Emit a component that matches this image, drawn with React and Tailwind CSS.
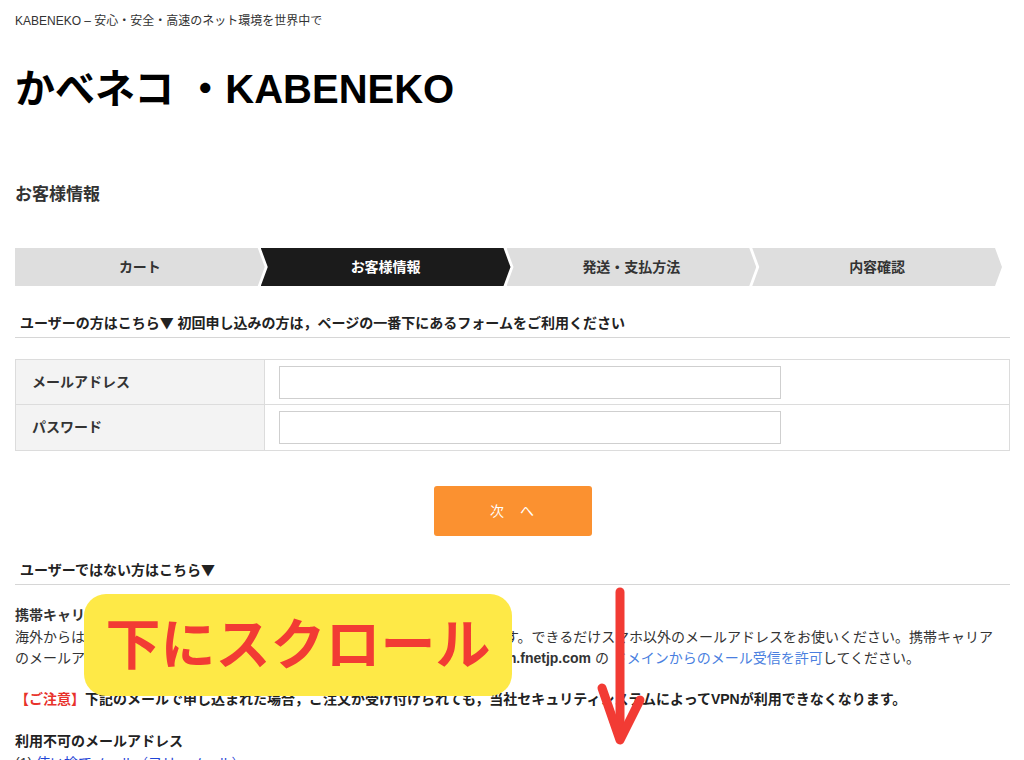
import React from 'react'

const steps = ['カート', 'お客様情報', '発送・支払方法', '内容確認']

const StepBar = () => {
    return (
        <div className="mt-[41px] flex w-[987px] h-[38px]">
            {steps.map((label, i) => (
                <div
                    key={label}
                    className={`flex-1 flex items-center justify-center text-[14px] font-bold ${i === 0
                        ? '[clip-path:polygon(0_0,calc(100%_-_7px)_0,100%_50%,calc(100%_-_7px)_100%,0_100%)]'
                        : '-ml-[4px] [clip-path:polygon(0_0,calc(100%_-_7px)_0,100%_50%,calc(100%_-_7px)_100%,0_100%,7px_50%)]'
                        } ${i === 1 ? 'bg-[#1b1b1b] text-white' : 'bg-[#dedede] text-[#333]'}`}
                >
                    {label}
                </div>
            ))}
        </div>
    )
}

const FormRow = ({ label, type, last }) => {
    return (
        <div className={`flex h-[45px] ${last ? '' : 'border-b border-[#dcdcdc]'}`}>
            <div className="w-[249px] shrink-0 bg-[#f3f3f3] border-r border-[#dcdcdc] flex items-center pl-[16px] text-[14px] font-bold text-[#333]">
                {label}
            </div>
            <div className="flex items-center pl-[14px]">
                <input
                    type={type}
                    className="w-[502px] h-[33px] border border-[#cfcfcf] bg-white outline-none px-2"
                />
            </div>
        </div>
    )
}

const Tri = () => <span className="font-['Noto_Sans_CJK_JP']">▼</span>

export default function App() {
    return (
        <div
            className="relative h-[760px] overflow-hidden bg-white text-[#333]"
            style={{ fontFamily: '"Liberation Sans", "Noto Sans CJK JP", sans-serif' }}
        >
            <div className="pl-[15px] w-[1010px]">
                <p className="pt-[13px] text-[12px] leading-[16px] text-[#333]">
                    KABENEKO – 安心・安全・高速のネット環境を世界中で
                </p>

                <h1 className="mt-[36px] text-[40px] leading-[48px] font-bold text-black">
                    かべネコ ・KABENEKO
                </h1>

                <h2 className="mt-[70px] text-[17px] leading-[24px] font-bold text-[#333]">
                    お客様情報
                </h2>

                <StepBar />

                <div className="mt-[26px] pl-[5px] pb-[4px] border-b border-[#d6d6d6] text-[14px] leading-[20px] font-bold text-[#222]">
                    ユーザーの方はこちら<Tri /> 初回申し込みの方は，ページの一番下にあるフォームをご利用ください
                </div>

                <div className="mt-[21px] border border-[#dcdcdc]">
                    <FormRow label="メールアドレス" type="email" />
                    <FormRow label="パスワード" type="password" last />
                </div>

                <div className="mt-[35px] flex justify-center">
                    <button className="w-[158px] h-[50px] rounded-[3px] bg-[#fb9130] text-white text-[14px] tracking-[1px]">
                        次　へ
                    </button>
                </div>

                <div className="mt-[23px] pl-[5px] pb-[4px] border-b border-[#d6d6d6] text-[14px] leading-[20px] font-bold text-[#222]">
                    ユーザーではない方はこちら<Tri />
                </div>

                <div className="mt-[20px] text-[14px] leading-[21.5px] text-[#333]">
                    <p className="font-bold">携帯キャリアのメールアドレスをお使いの方へ</p>
                    <p>
                        海外からは携帯キャリアのメールアドレスにはメールが届かない場合があります。できるだけスマホ以外のメールアドレスをお使いください。携帯キャリア
                        <br />
                        のメールアドレスをお使いの場合は，受信設定で必ず <span className="font-bold">noreply@kabeneko.com.fnetjp.com</span> の <span className="text-[#4a7fe0]">ドメインからのメール受信を許可</span>してください。
                    </p>
                </div>

                <p className="mt-[19px] text-[14px] leading-[21.5px] font-bold text-[#222]">
                    <span className="text-[#e8322b]">【ご注意】</span>下記のメールで申し込まれた場合，ご注文が受け付けられても，当社セキュリティシステムによってVPNが利用できなくなります。
                </p>

                <div className="mt-[21px] text-[14px] leading-[21.5px]">
                    <p className="font-bold text-[#222]">利用不可のメールアドレス</p>
                    <p>
                        (1) <span className="text-[#1f44d6]">使い捨てメール（フリーメール）</span>
                    </p>
                </div>
            </div>

            {/* annotation overlay */}
            <div className="absolute left-[84px] top-[594px] w-[428px] h-[102px] rounded-[22px] bg-[#fee947] flex items-center justify-center">
                <span className="text-[55px] font-bold text-[#f23b34] leading-none">下にスクロール</span>
            </div>
            <svg className="absolute left-0 top-0 w-[1024px] h-[760px] pointer-events-none" viewBox="0 0 1024 760">
                <g stroke="#f23b34" strokeWidth="9" strokeLinecap="round" strokeLinejoin="round" fill="none">
                    <path d="M620 592 L620 738" />
                    <path d="M602 688 L620 740 L640 700" />
                </g>
            </svg>
        </div>
    )
}
